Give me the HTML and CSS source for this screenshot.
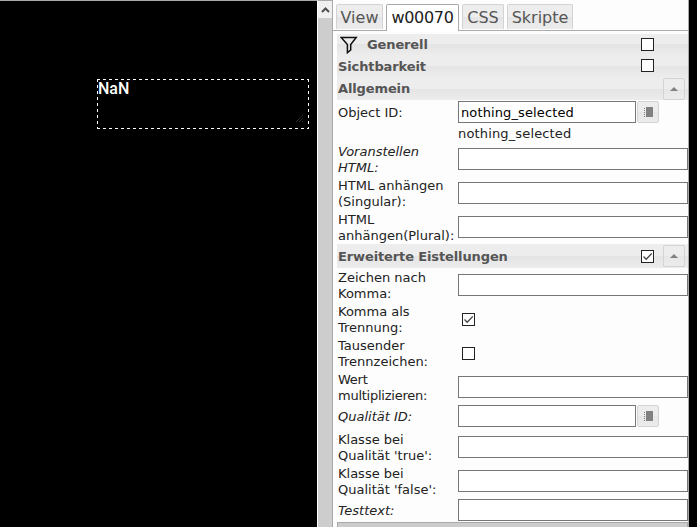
FILE: index.html
```html
<!DOCTYPE html>
<html lang="de">
<head>
<meta charset="utf-8">
<title>Widget Editor</title>
<link rel="stylesheet" href="styles.css">
</head>
<body>
<svg class="defs" width="0" height="0">
  <symbol id="check" viewBox="0 0 13 13"><path d="M2.5 6.5L5.2 9.2L10.8 3.4" fill="none" stroke="#444" stroke-width="1.3"/></symbol>
  <symbol id="book" viewBox="0 0 9 10"><path d="M2 0h7v10H2zM0 1h1v1H0zM0 3h1v1H0zM0 5h1v1H0zM0 7h1v1H0zM0 9h1v1H0z" fill="#808282"/></symbol>
  <symbol id="up" viewBox="0 0 8 4"><path d="M4 0L8 4H0z" fill="#808282"/></symbol>
</svg>
<main class="editor">
  <section class="canvas"><div class="widget">NaN<svg class="grip" width="7" height="7" viewBox="0 0 7 7"><path d="M0 7L7 0M3 7L7 3M6 7L7 6" stroke="#444" stroke-width="1" stroke-dasharray="1 .6"/></svg></div></section>
  <div class="scrollbar"><div class="scroll-up"><svg width="9" height="6" viewBox="0 0 9 6"><path d="M1 5L4.5 1.5L8 5" fill="none" stroke="#505050" stroke-width="2"/></svg></div></div>
  <aside class="panel">
    <nav class="tabs"><div class="tab view">View</div><div class="tab active">w00070</div><div class="tab css">CSS</div><div class="tab scripts">Skripte</div></nav>
    <div class="properties">
      <div class="head general"><svg class="filter" width="18" height="18" viewBox="0 0 18 18"><path d="M1.2 1.5H16.2L10.7 8.5V14L7.4 16.7V8.5z" fill="none" stroke="#111" stroke-width="1.5"/></svg><b>Generell</b><i class="box"></i></div>
      <div class="head visibility"><b>Sichtbarkeit</b><i class="box"></i></div>
      <div class="head common"><b>Allgemein</b><i class="button"><svg width="8" height="4"><use href="#up"/></svg></i></div>
      <div class="row object"><label>Object ID:</label><div class="value"><div class="picker"><div class="field">nothing_selected</div><i class="button"><svg width="9" height="10"><use href="#book"/></svg></i></div><div class="hint">nothing_selected</div></div></div>
      <div class="row"><label class="slanted">Voranstellen HTML:</label><div class="field"></div></div>
      <div class="row"><label>HTML anhängen (Singular):</label><div class="field"></div></div>
      <div class="row"><label>HTML anhängen(Plural):</label><div class="field"></div></div>
      <div class="head advanced"><b>Erweiterte Eistellungen</b><i class="box"><svg width="13" height="13"><use href="#check"/></svg></i><i class="button"><svg width="8" height="4"><use href="#up"/></svg></i></div>
      <div class="row"><label>Zeichen nach Komma:</label><div class="field"></div></div>
      <div class="row"><label>Komma als Trennung:</label><i class="box"><svg width="13" height="13"><use href="#check"/></svg></i></div>
      <div class="row"><label>Tausender Trennzeichen:</label><i class="box"></i></div>
      <div class="row"><label class="tight">Wert multiplizieren:</label><div class="field"></div></div>
      <div class="row quality"><label class="slanted">Qualität ID:</label><div class="picker"><div class="field"></div><i class="button"><svg width="9" height="10"><use href="#book"/></svg></i></div></div>
      <div class="row"><label>Klasse bei Qualität 'true':</label><div class="field"></div></div>
      <div class="row"><label>Klasse bei Qualität 'false':</label><div class="field"></div></div>
      <div class="row test"><label class="slanted">Testtext:</label><div class="field"></div></div>
      <div class="footer"></div>
    </div>
  </aside>
</main>
</body>
</html>
```
FILE: styles.css
```css
* { box-sizing: border-box; }
body { margin: 0; background: #000; overflow: hidden; font: 13px/16px "DejaVu Sans", sans-serif; color: #222; }
.defs { position: absolute; }
svg { display: block; }
.editor { display: grid; grid-template-columns: 317px 15px 357px; height: 527px; }
.canvas { border-top: 1px solid #aaa; padding: 78px 0 0 97px; background: #000; }
.widget {
  position: relative; width: 212px; height: 50px; padding: 0 1px;
  font: 500 16px/19px Roboto, sans-serif; color: #fff;
  background:
    repeating-linear-gradient(90deg, #fff 0 3px, transparent 3px 6px) 0 0 / 100% 1px no-repeat,
    repeating-linear-gradient(90deg, #fff 0 3px, transparent 3px 6px) 0 100% / 100% 1px no-repeat,
    repeating-linear-gradient(#fff 0 3px, transparent 3px 6px) 0 0 / 1px 100% no-repeat,
    repeating-linear-gradient(#fff 0 3px, transparent 3px 6px) 100% 0 / 1px 100% no-repeat;
}
.grip { position: absolute; right: 6px; bottom: 7px; }
.scrollbar { background: #cdcdcd; border-left: 1px solid #fff; border-top: 1px solid #aaa; }
.scroll-up { height: 17px; background: #f0f0f0; display: flex; align-items: center; justify-content: center; }
.panel { background: #fdfdfd; border-left: 1px solid #aaa; border-right: 1px solid #aaa; }
.tabs { height: 31px; display: flex; gap: 4px; padding: 4px 0 0 3px; border-bottom: 1px solid #aaa; font: 16px/25px "DejaVu Sans", sans-serif; }
.tab { height: 25px; display: flex; justify-content: center; white-space: nowrap; border: 1px solid #d3d3d3; border-bottom: 0; border-radius: 2px 2px 0 0; color: #555; background: linear-gradient(#ededed 50%, #e5e5e5 50%, #ececec); }
.view { width: 47px; margin-right: -1px; }
.active { width: 73px; height: 27px; border-color: #aaa; background: #fff; color: #212121; letter-spacing: -.3px; margin-right: -1px; }
.css { width: 42px; margin-right: -1px; }
.scripts { width: 66px; }
.properties { padding: 3px 0 0 4px; }
.head { display: flex; align-items: center; padding-left: 1px; color: #555; letter-spacing: -.12px; background: linear-gradient(#ededed 50%, #e4e4e4 50%, #ececec); }
.head b { flex: 1; padding-top: 1px; }
.general { height: 21px; padding-left: 3px; }
.filter { margin-right: 9px; }
.visibility { height: 22px; }
.visibility .box { margin-bottom: 1px; }
.common { height: 23px; }
.common b { padding: 0; }
.advanced { height: 24px; }
.box { display: block; flex: none; width: 13px; height: 13px; border: 1px solid #222; background: #fff; }
.box svg { margin: -1px; }
.head .box { margin-right: 34px; }
.advanced .box { margin-right: 9px; }
.button { width: 22px; height: 22px; flex: none; display: flex; align-items: center; justify-content: center; border: 1px solid #d3d3d3; border-radius: 2px; background: linear-gradient(#ededed 50%, #e6e6e6 50%, #ececec); }
.head .button { margin-right: 3px; }
.row { height: 34px; display: grid; grid-template-columns: 120px 230px; align-items: center; padding-left: 1px; }
label { padding-top: 2px; }
.tight { letter-spacing: -.25px; }
.slanted { font-style: italic; }
.field { height: 22px; border: 1px solid #767676; background: #fff; padding: 3px 2px; color: #000; letter-spacing: .12px; }
.row > .box { margin-left: 4px; }
.picker { display: grid; grid-template-columns: 178px 22px; gap: 1px; }
.object { height: 42px; align-items: start; padding-top: 1px; }
.object label { padding-top: 4px; }
.hint { padding-top: 3px; letter-spacing: .15px; }
.quality, .test { height: 26px; align-items: start; padding-top: 1px; }
.quality label, .test label { padding-top: 4px; }
.test { height: 24px; }
.footer { height: 6px; border: 1px solid #aaa; border-bottom: 0; background: #ccc; }
```
